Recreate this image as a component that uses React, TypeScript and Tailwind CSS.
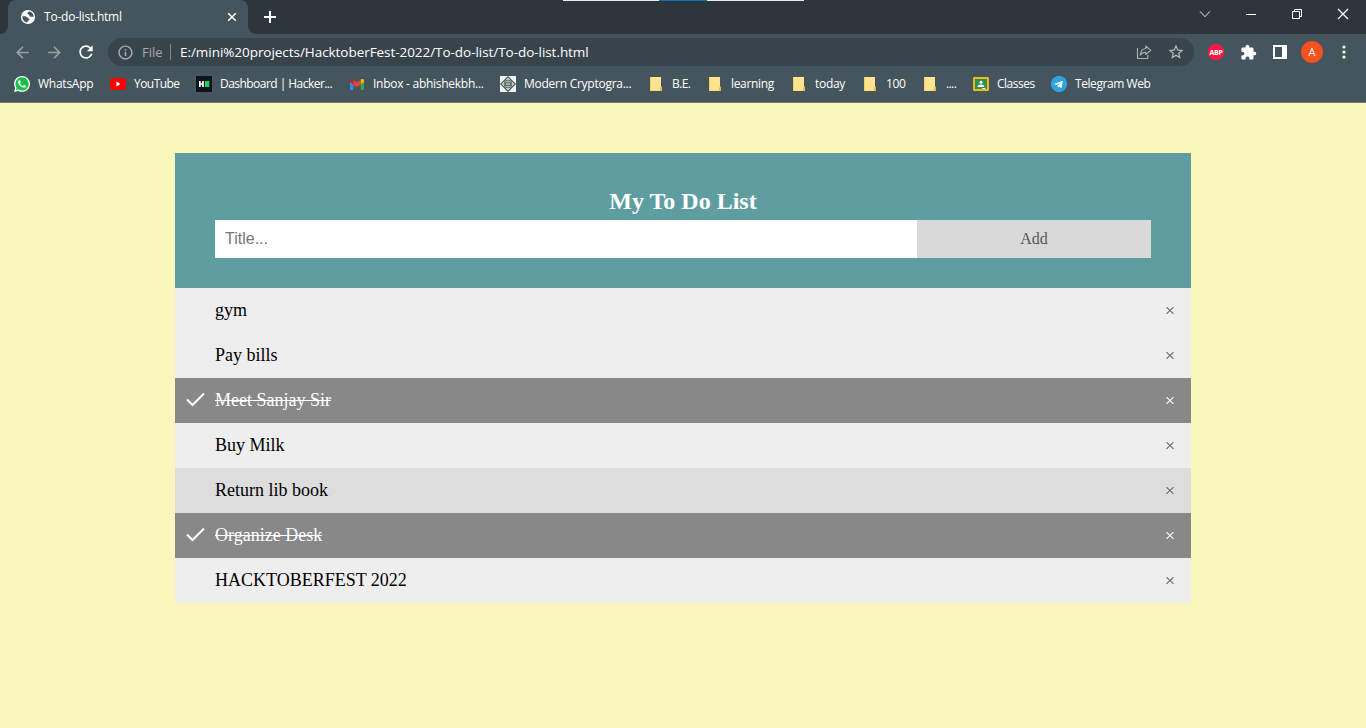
import React from "react";
import { MdArrowBack, MdArrowForward, MdRefresh, MdInfoOutline, MdStarBorder, MdExtension } from "react-icons/md";
import { SiWhatsapp } from "react-icons/si";
import { FaTelegram } from "react-icons/fa";

const Globe = () => (
  <svg width="16" height="16" viewBox="0 0 16 16">
    <circle cx="8" cy="8" r="7.100" fill="#fff" />
    <path d="M9.800 2.600c-1.900.1-2.400 1.200-2.200 2.200.2.900 1.300.7 1.700 1.400.4.800.9 1.500 2 1.500h2.400c-.1-2.400-1.600-4.500-3.900-5.100z" fill="#45555e" />
    <path d="M2.300 7.300c1.900.1 3.400-.1 4.600.6 1 .6.800 1.500 1.700 1.700.9.200 1 .9.500 1.500-.8.900-1.600 1-1.800 2.300-3-.3-5.100-2.900-5-6.100z" fill="#45555e" />
  </svg>
);

const WhatsApp = () => (
  <svg width="16" height="16" viewBox="0 0 24 24">
    <path d="M1 23l1.600-6A10.900 10.900 0 1 1 7 21.500z" fill="#11c244" />
    <SiWhatsapp size={24} color="#fff" />
  </svg>
);

const YouTube = () => (
  <svg width="16" height="16" viewBox="0 0 16 16">
    <rect x="0" y="2.300" width="16" height="11.400" rx="2" fill="#f00" />
    <path d="M6.400 5.600v4.800l4-2.400z" fill="#fff" />
  </svg>
);

const HackerRank = () => (
  <svg width="16" height="16" viewBox="0 0 16 16">
    <rect width="16" height="16" fill="#0d141e" />
    <path d="M3 5h1.700v2.200h1.400V5h1.700v6H6.100V8.700H4.700V11H3z" fill="#fff" />
    <rect x="9" y="5" width="4.300" height="6" fill="#1fd062" />
  </svg>
);

const Gmail = () => (
  <svg width="16" height="16" viewBox="0 0 16 16">
    <path d="M1 5l3.300 2.300V14H2a1 1 0 0 1-1-1z" fill="#4285f4" />
    <path d="M11.700 7.300L15 5v8a1 1 0 0 1-1 1h-2.300z" fill="#34a853" />
    <path d="M11.700 3.600c1.600-1.200 3.300-.5 3.300 1.100v1.200l-3.300 2.500z" fill="#fbbc04" />
    <path d="M4.300 3.800L8 6.600l3.700-2.800v4.600L8 11.200 4.300 8.400z" fill="#ea4335" />
    <path d="M1 4.700c0-1.600 1.800-2.300 3.300-1.100v4.800L1 5.900z" fill="#c5221f" />
  </svg>
);

const Crypto = () => (
  <svg width="16" height="16" viewBox="0 0 16 16">
    <rect width="16" height="16" fill="#f1f3f2" />
    <path d="M8 .8L15.200 8 8 15.200.8 8z" fill="#e8eeea" stroke="#4a5350" strokeWidth="1.200" />
    <circle cx="8" cy="8" r="4" fill="#aab9b1" stroke="#59645f" strokeWidth=".9" />
    <path d="M5.500 6.700h5v2.800h-5z" fill="none" stroke="#3f6856" strokeWidth=".9" />
  </svg>
);

const Folder = () => (
  <svg width="16" height="16" viewBox="0 0 16 16">
    <path d="M2 1h11v9.500l1 .8V15H2z" fill="#ffe48f" />
    <path d="M2 1h1v14H2zM2 14.400h12v.6H2z" fill="#f3cf62" />
    <path d="M12 15v-3l1-1.500 1 .8V15z" fill="#e9bd41" />
  </svg>
);

const Classroom = () => (
  <svg width="16" height="16" viewBox="0 0 16 16">
    <rect y="1" width="16" height="14" rx="1" fill="#f0b91b" />
    <rect x="2" y="3" width="12" height="10" fill="#2f9254" />
    <circle cx="8" cy="6.300" r="1.500" fill="#fff" />
    <path d="M4.600 11c0-1.700 1.800-2.400 3.400-2.400s3.400.7 3.400 2.400z" fill="#fff" />
    <rect x="9" y="12" width="3.500" height="1" fill="#e6f2e9" />
  </svg>
);

const Telegram = () => (
  <span className="flex size-4 items-center justify-center rounded-full bg-[radial-gradient(#fff_55%,#2fa3dc_60%)]">
    <FaTelegram size={16} color="#2fa3dc" />
  </span>
);

const bookmarks = [
  { label: "WhatsApp", icon: <WhatsApp />, cls: "w-24 tracking-[-0.25px]" },
  { label: "YouTube", icon: <YouTube />, cls: "w-[86px] tracking-[-0.55px]" },
  { label: "Dashboard | Hacker...", icon: <HackerRank />, cls: "w-[153px] tracking-[-0.54px]" },
  { label: "Inbox - abhishekbh...", icon: <Gmail />, cls: "w-[151px] tracking-[-0.27px]" },
  { label: "Modern Cryptogra...", icon: <Crypto />, cls: "w-[148px] tracking-[-0.26px]" },
  { label: "B.E.", icon: <Folder />, cls: "w-[59px] tracking-[-0.6px]" },
  { label: "learning", icon: <Folder />, cls: "w-[84px] tracking-[-0.35px]" },
  { label: "today", icon: <Folder />, cls: "w-[71px] tracking-[-0.3px]" },
  { label: "100", icon: <Folder />, cls: "w-[60px] tracking-[-0.4px]" },
  { label: "....", icon: <Folder />, cls: "w-[51px] tracking-[-0.6px]" },
  { label: "Classes", icon: <Classroom />, cls: "w-[78px] tracking-[-0.5px]" },
  { label: "Telegram Web", icon: <Telegram />, cls: "w-[100px] tracking-[-0.43px]" },
];

const todos = [
  { text: "gym", state: "" },
  { text: "Pay bills", state: "" },
  { text: "Meet Sanjay Sir", state: "done" },
  { text: "Buy Milk", state: "" },
  { text: "Return lib book", state: "hover" },
  { text: "Organize Desk", state: "done" },
  { text: "HACKTOBERFEST 2022", state: "" },
];

function TabStrip() {
  return (
    <div className="relative flex h-[34px] bg-[#2c363c] pl-2">
      <div className="absolute left-[563px] top-0 flex h-px w-[241px] bg-[#e3eceb]">
        <div className="ml-24 w-12 bg-[#1b6cb0]" />
      </div>
      <div className="relative flex w-60 items-center rounded-t-lg bg-[#45555e] pl-3 pr-2.5 text-white">
        <svg className="absolute -left-2 bottom-0" width="8" height="8"><path d="M8 0v8H0a8 8 0 0 0 8-8z" fill="#45555e" /></svg>
        <svg className="absolute -right-2 bottom-0" width="8" height="8"><path d="M0 0v8h8a8 8 0 0 1-8-8z" fill="#45555e" /></svg>
        <Globe />
        <span className="ml-2 flex-1 text-[12px] tracking-[-0.22px]">To-do-list.html</span>
        <svg width="12" height="12" viewBox="0 0 12 12"><path d="M2.200 2.200l7.600 7.600M9.800 2.200L2.200 9.800" stroke="#fff" strokeWidth="1.500" /></svg>
      </div>
      <svg className="ml-4 mt-[11px]" width="12" height="12" viewBox="0 0 12 12"><path d="M6 0v12M0 6h12" stroke="#fff" strokeWidth="2" /></svg>
      <div className="ml-auto flex h-7 items-center">
        <svg className="mr-[35px]" width="12" height="12" viewBox="0 0 12 12" fill="none" stroke="#e6e9ea"><path d="M1 3.300l5 5.400 5-5.400" /></svg>
        <svg className="mr-[35px]" width="10" height="10" viewBox="0 0 10 10"><path d="M0 5.500h10" stroke="#fff" /></svg>
        <svg className="mr-[34px]" width="12" height="12" viewBox="0 0 12 12" fill="none" stroke="#fff"><path d="M1.500 3.500h7v7h-7zM3.500 3.500v-2h7v7h-2" /></svg>
        <svg className="mr-[17px]" width="12" height="12" viewBox="0 0 12 12"><path d="M1 1l10 10M11 1L1 11" stroke="#fff" strokeWidth="1.200" /></svg>
      </div>
    </div>
  );
}

function Toolbar() {
  return (
    <div className="flex h-9 items-center bg-[#45555e] pl-[13px] text-white">
      <MdArrowBack size={19} color="#98a2a7" />
      <MdArrowForward size={19} color="#98a2a7" className="ml-[13px]" />
      <MdRefresh size={20} className="ml-3" />
      <div className="ml-3 flex h-7 w-[1086px] items-center rounded-full bg-[#38444b] pl-[9px] pr-[9px]">
        <MdInfoOutline size={17} color="#a7afb3" />
        <span className="ml-2 w-[21px] whitespace-nowrap pt-px text-[13px] text-[#a3abaf]">File</span>
        <span className="ml-[7px] h-4 w-px bg-[#7d878c]" />
        <span className="ml-[9px] flex-1 whitespace-nowrap pt-px text-[13.500px] tracking-[-0.05px]">E:/mini%20projects/HacktoberFest-2022/To-do-list/To-do-list.html</span>
        <svg width="16" height="16" viewBox="0 0 16 16" fill="none" stroke="#a9b1b5" strokeWidth="1.100">
          <path d="M1.500 4v10.500h10.300V11" />
          <path d="M9.700 2l5 4.300-5 4.200V8.200c-2.600 0-4.300.9-5.500 3 .4-3.600 2-6.300 5.500-6.700z" strokeLinejoin="round" />
        </svg>
        <MdStarBorder size={18} color="#b5bcc0" className="ml-[15px]" />
      </div>
      <span className="ml-[14px] flex size-4 items-center justify-center bg-[#ed1e45] text-[7px] font-bold leading-none tracking-[-0.3px] [clip-path:polygon(30%_0,70%_0,100%_30%,100%_70%,70%_100%,30%_100%,0_70%,0_30%)]">
        ABP
      </span>
      <MdExtension size={17} className="ml-4" />
      <svg className="ml-4" width="14" height="14" viewBox="0 0 14 14"><path fillRule="evenodd" d="M0 0h14v14H0zM2 2v10h7V2z" fill="#fff" /></svg>
      <span className="ml-[14px] flex size-[22px] items-center justify-center rounded-full bg-[#f4511e] text-[11px]">A</span>
      <svg className="ml-[19px]" width="4" height="14" viewBox="0 0 4 14" fill="#fff"><circle cx="2" cy="2" r="1.600" /><circle cx="2" cy="7" r="1.600" /><circle cx="2" cy="12" r="1.600" /></svg>
    </div>
  );
}

export default function App() {
  return (
    <div className="h-[728px] w-[1366px] overflow-hidden bg-[#faf7bc]">
      <div className="font-['Open_Sans',sans-serif]">
        <TabStrip />
        <Toolbar />
        <div className="flex h-[33px] border-b border-[#6b7675] bg-[#45555e] pb-1 pl-3.5 text-white">
          {bookmarks.map((b, i) => (
            <div key={i} className={`flex shrink-0 items-center gap-2 whitespace-nowrap text-[12px] ${b.cls}`}>
              <span className="shrink-0">{b.icon}</span>
              <span>{b.label}</span>
            </div>
          ))}
        </div>
      </div>

      <main className="mx-auto mt-[50px] w-[1016px] font-['Liberation_Serif',serif]">
        <header className="h-[135px] bg-[#5f9ea0] px-10 pt-[35px] text-center">
          <h2 className="mb-[5px] text-2xl font-bold leading-[27px] text-white">My To Do List</h2>
          <div className="flex h-[38px]">
            <input className="w-3/4 bg-white p-2.5 font-['Liberation_Sans',sans-serif] text-base leading-[18px] outline-none placeholder:text-[#757575]" placeholder="Title..." />
            <button className="w-1/4 bg-[#d9d9d9] text-base text-[#555]">Add</button>
          </div>
        </header>
        <ul className="text-lg leading-[21px]">
          {todos.map((t) => (
            <li
              key={t.text}
              className={`flex h-[45px] items-center pr-[17px] ${t.state === "done" ? "bg-[#888] text-white" : t.state === "hover" ? "bg-[#ddd] text-black" : "bg-[#eee] text-black"}`}
            >
              <span className="w-10 pl-[11px]">
                {t.state === "done" && (
                  <svg width="20" height="16" viewBox="0 0 20 16" className="-mt-1"><path d="M1 8.500L6.500 14 18 2.500" fill="none" stroke="#fff" strokeWidth="2" /></svg>
                )}
              </span>
              <span className={t.state === "done" ? "flex-1 line-through" : "flex-1"}>{t.text}</span>
              <svg width="8" height="7" viewBox="0 0 8 7" className={t.state === "done" ? "text-white" : "text-[#666]"}>
                <path d="M.5.2l7 6.600M7.500.2l-7 6.600" stroke="currentColor" strokeWidth="1.100" />
              </svg>
            </li>
          ))}
        </ul>
      </main>
    </div>
  );
}
